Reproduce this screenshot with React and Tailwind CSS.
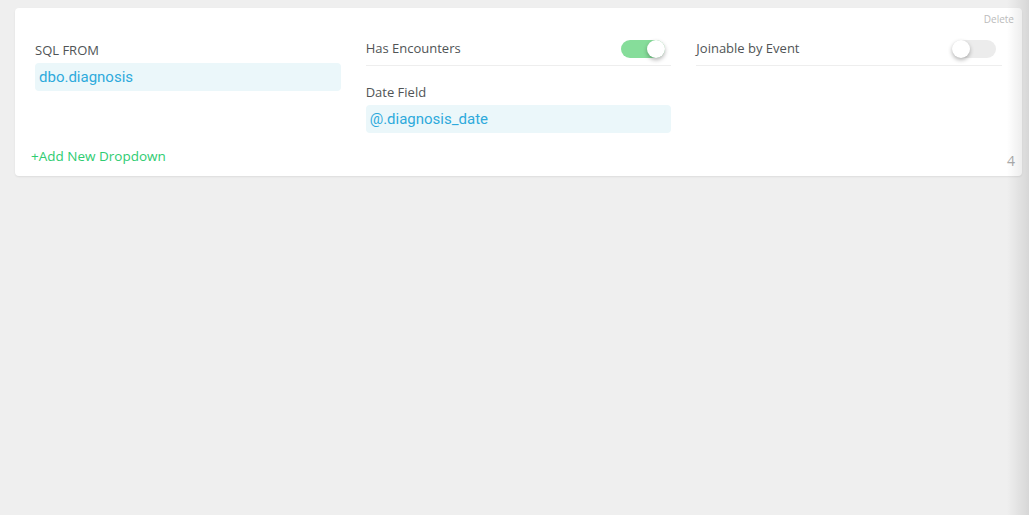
function Toggle({ on }) {
  return (
    <div
      className={`relative h-[18px] w-[44px] rounded-full ${
        on ? "bg-[#86dd9a]" : "bg-[#ececec]"
      }`}
    >
      <div
        className={`absolute top-0 h-[18px] w-[18px] rounded-full bg-white shadow-[0_2px_4px_rgba(0,0,0,0.3)] ${
          on ? "right-0" : "left-0"
        }`}
      />
    </div>
  );
}

function ToggleRow({ label, on }) {
  return (
    <div className="flex h-[32px] items-center justify-between border-b border-[#eeeeee] pb-[1px]">
      <span className="text-[13px] text-[#505456]">{label}</span>
      <div className="mr-[6px]">
        <Toggle on={on} />
      </div>
    </div>
  );
}

function Field({ label, value }) {
  return (
    <div>
      <p className="text-[13px] leading-[18px] text-[#505456]">{label}</p>
      <div className="mt-[4px] flex h-[28px] items-center rounded-[4px] bg-[#ebf7fa] px-[4px] font-['Roboto',sans-serif] text-[15px] text-[#2eaadc]">
        {value}
      </div>
    </div>
  );
}

export default function App() {
  return (
    <div className="relative h-[515px] w-full overflow-hidden bg-[#efefef] font-['Open_Sans',sans-serif]">
      <div className="ml-[15px] mr-[7px] mt-[8px] rounded-[4px] bg-white shadow-[0_1px_2px_rgba(0,0,0,0.08)]">
        <div className="flex justify-end pr-[8px] pt-[4px]">
          <span className="text-[10px] leading-[14px] text-[#bbbbbb]">Delete</span>
        </div>
        <div className="grid grid-cols-3 gap-x-[25px] px-[20px] pt-[8px]">
          <div className="pt-[7px]">
            <Field label="SQL FROM" value="dbo.diagnosis" />
          </div>
          <div>
            <ToggleRow label="Has Encounters" on />
            <div className="mt-[17px]">
              <Field label="Date Field" value="@.diagnosis_date" />
            </div>
          </div>
          <div>
            <ToggleRow label="Joinable by Event" on={false} />
          </div>
        </div>
        <div className="flex items-end justify-between pb-[6px] pl-[16px] pr-[7px] pt-[13px]">
          <span className="mb-[4px] text-[13.5px] text-[#2ecc71]">+Add New Dropdown</span>
          <span className="text-[14px] leading-[18px] text-[#aaaaaa]">4</span>
        </div>
      </div>
      <div className="pointer-events-none absolute right-0 top-0 h-full w-[22px] bg-gradient-to-r from-transparent to-[rgba(0,0,0,0.1)]" />
    </div>
  );
}
